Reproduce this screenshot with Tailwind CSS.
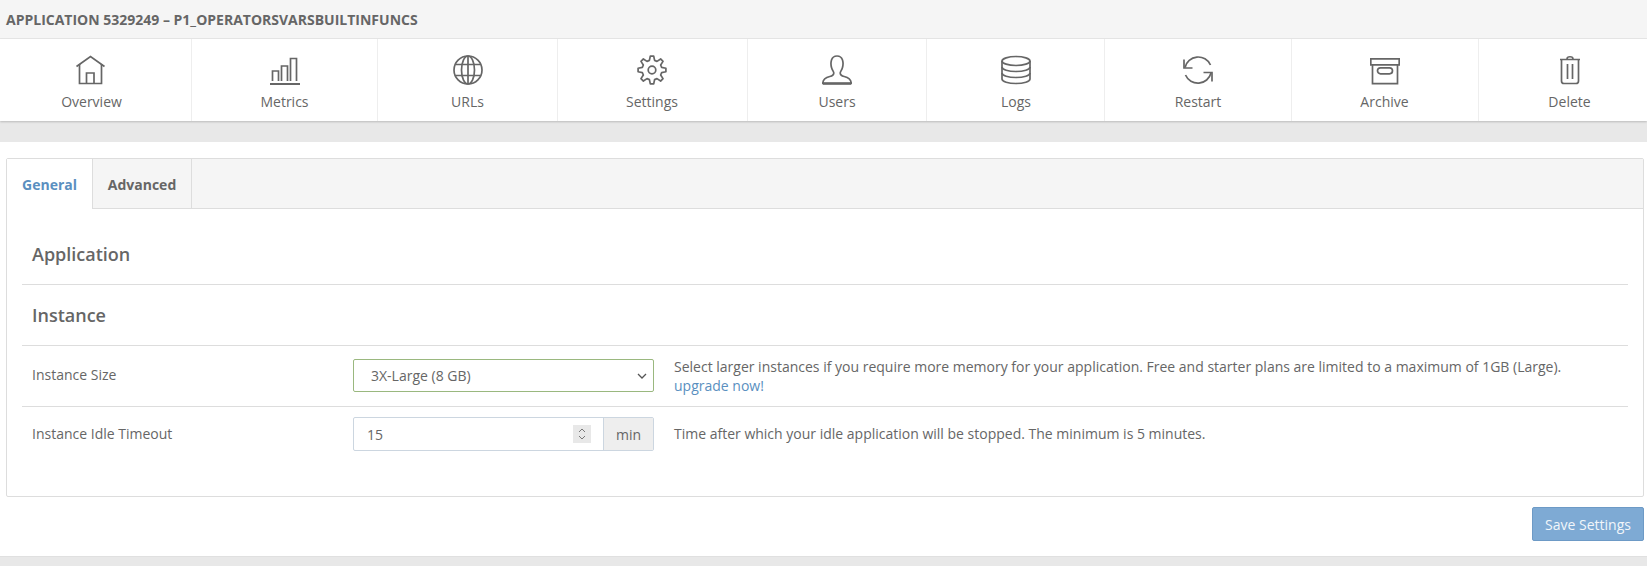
<!DOCTYPE html>
<html lang="en">
<head>
  <meta charset="UTF-8">
  <title>Application Settings</title>
  <script src="https://cdn.jsdelivr.net/npm/@tailwindcss/browser@4"></script>
</head>
<body class="bg-white font-['Open_Sans',sans-serif] text-[14px] text-[#666] overflow-hidden h-[566px] flex flex-col">
  <!-- title bar -->
  <div class="h-[39px] bg-[#f5f5f5] border-b border-[#e7e7e7] flex items-center px-[6px] font-bold uppercase">Application 5329249 – P1_OperatorsVarsBuiltinFuncs</div>

  <!-- toolbar -->
  <div class="h-[82px] grid grid-cols-[192px_186px_180px_190px_179px_178px_187px_187px_168px] bg-white shadow-[0_1px_2px_rgba(0,0,0,0.2)] relative">
    <a class="flex flex-col items-center pt-[16px] pr-[8px] border-r border-[#eee]">
      <svg class="w-[30px] h-[30px] -translate-x-[2px]" viewBox="0 0 30 30" fill="none" stroke="#666" stroke-width="1.700"><path d="M1.500 11.500 15.500 1.500l14 10"/><path d="M4.500 9v19.500h22V9"/><path d="M11.500 28.500V18h7.500v10.500"/></svg>
      <span class="mt-[7px] leading-[20px]">Overview</span>
    </a>
    <a class="flex flex-col items-center pt-[16px] border-r border-[#eee]">
      <svg class="w-[30px] h-[30px]" viewBox="0 0 30 30" fill="none" stroke="#666" stroke-width="1.700"><path d="M0 29h30" stroke-width="2"/><path d="M2.500 26V16h6v10M11.500 26V11h6v15M20.500 26V3.500h6V26"/></svg>
      <span class="mt-[7px] leading-[20px]">Metrics</span>
    </a>
    <a class="flex flex-col items-center pt-[16px] border-r border-[#eee]">
      <svg class="w-[30px] h-[30px]" viewBox="0 0 30 30" fill="none" stroke="#666" stroke-width="1.700"><circle cx="15" cy="15" r="14"/><ellipse cx="15" cy="15" rx="6.500" ry="14"/><path d="M15 1v28M2.500 9.500h25M2.500 20.500h25"/></svg>
      <span class="mt-[7px] leading-[20px]">URLs</span>
    </a>
    <a class="flex flex-col items-center pt-[16px] pr-[1px] border-r border-[#eee]">
      <svg class="w-[30px] h-[30px]" viewBox="0 0 30 30" fill="none" stroke="#666" stroke-width="1.700" stroke-linejoin="round"><circle cx="15" cy="15" r="3.800"/><path d="M13.290 1.100H16.710L17.590 5.340 20 6.340 23.620 3.970 26.030 6.380 23.660 10 24.660 12.410 28.900 13.290V16.710L24.660 17.590 23.660 20 26.030 23.620 23.620 26.030 20 23.660 17.590 24.660 16.710 28.900H13.290L12.410 24.660 10 23.660 6.380 26.030 3.970 23.620 6.340 20 5.340 17.590 1.100 16.710V13.290L5.340 12.410 6.340 10 3.970 6.380 6.380 3.970 10 6.340 12.410 5.340z"/></svg>
      <span class="mt-[7px] leading-[20px]">Settings</span>
    </a>
    <a class="flex flex-col items-center pt-[16px] border-r border-[#eee]">
      <svg class="w-[30px] h-[30px]" viewBox="0 0 30 30" fill="none" stroke="#666" stroke-width="1.700" stroke-linejoin="round"><path d="M.8 28.500c0-4.500 3-6 7-7 2.500-.6 4-1.500 4-3.500 0-1.500-1.500-2.500-2.300-5.500-.6-2.200-.8-5 0-7.500C10.300 2.500 12.500 1 15 1s4.700 1.500 5.500 4c.8 2.500.6 5.300 0 7.500-.8 3-2.300 4-2.300 5.500 0 2 1.500 2.900 4 3.500 4 1 7 2.500 7 7z"/><path d="M.8 28.500h28.400" stroke-width="2.500"/></svg>
      <span class="mt-[7px] leading-[20px]">Users</span>
    </a>
    <a class="flex flex-col items-center pt-[16px] pl-[1px] border-r border-[#eee]">
      <svg class="w-[30px] h-[30px]" viewBox="0 0 30 30" fill="none" stroke="#666" stroke-width="1.700"><ellipse cx="15" cy="6" rx="14" ry="4.500"/><path d="M1 6v18c0 2.500 6.300 4.500 14 4.500s14-2 14-4.500V6"/><path d="M1 12c0 2.500 6.300 4.500 14 4.500S29 14.500 29 12M1 18c0 2.500 6.300 4.500 14 4.500S29 20.500 29 18"/></svg>
      <span class="mt-[7px] leading-[20px]">Logs</span>
    </a>
    <a class="flex flex-col items-center pt-[16px] border-r border-[#eee]">
      <svg class="w-[30px] h-[30px]" viewBox="0 0 30 30" fill="none" stroke="#666" stroke-width="1.700"><path d="M1 4.500V13H9.500M29 26.500V17.500H20.500"/><path d="M2 12.500A13.500 13.500 0 0 1 27.500 10M28 18A13.500 13.500 0 0 1 2.500 20"/></svg>
      <span class="mt-[7px] leading-[20px]">Restart</span>
    </a>
    <a class="flex flex-col items-center pt-[16px] pr-[1px] border-r border-[#eee]">
      <svg class="w-[30px] h-[30px]" viewBox="0 0 30 30" fill="none" stroke="#666" stroke-width="1.700"><path d="M.8 3.800h28.400v6H.8z"/><path d="M2.500 10v18.700h25V10"/><rect x="7.500" y="12.800" width="15" height="6" rx="3"/></svg>
      <span class="mt-[7px] leading-[20px]">Archive</span>
    </a>
    <a class="flex flex-col items-center pt-[16px] pl-[13px]">
      <svg class="w-[30px] h-[30px]" viewBox="0 0 30 30" fill="none" stroke="#666" stroke-width="1.700"><path d="M5 4.500h20M12 4c0-3 6-3 6 0"/><path d="M6.500 5v21c0 1.500 1 2.500 2.500 2.500h12c1.500 0 2.500-1 2.500-2.500V5"/><path d="M12.500 9v15M17.500 9v15"/></svg>
      <span class="mt-[7px] leading-[20px]">Delete</span>
    </a>
  </div>

  <!-- grey band -->
  <div class="h-[21px] bg-[#e8e8e8]"></div>

  <!-- content -->
  <div class="flex-1 pl-[6px] pr-[3px] pt-[16px]">
    <div class="h-[339px] border border-[#ddd] rounded-[2px]">
      <div class="flex h-[50px] bg-[#f5f5f5] border-b border-[#ddd]">
        <div class="w-[86px] h-[50px] pt-[1px] bg-white border-r border-[#ddd] flex items-center justify-center font-bold text-[#5a8fc0]">General</div>
        <div class="w-[99px] pt-[1px] border-r border-[#ddd] flex items-center justify-center font-bold">Advanced</div>
      </div>
      <div class="px-[15px]">
        <h3 class="h-[76px] pt-[25px] px-[10px] text-[18px] font-semibold leading-[40px] border-b border-[#ddd]">Application</h3>
        <h3 class="h-[61px] px-[10px] text-[18px] font-semibold leading-[60px] border-b border-[#ddd]">Instance</h3>
        <div class="flex h-[61px] px-[10px] border-b border-[#ddd]">
          <label class="w-[321px] pt-[20px] leading-[18px]">Instance Size</label>
          <div class="w-[301px] h-[33px] mt-[13px] border border-[#9ab87f] rounded-[2px] flex items-center justify-between pl-[17px] pr-[5px]">
            <span>3X-Large (8 GB)</span>
            <svg class="w-[12px] h-[12px]" viewBox="0 0 12 12" fill="none" stroke="#555" stroke-width="1.300"><path d="M2 4l4 4 4-4"/></svg>
          </div>
          <p class="ml-[20px] mt-[11px] leading-[19px]">Select larger instances if you require more memory for your application. Free and starter plans are limited to a maximum of 1GB (Large).<br><a class="text-[#5a8fc0]">upgrade now!</a></p>
        </div>
        <div class="flex px-[10px]">
          <label class="w-[321px] pt-[18px] leading-[18px]">Instance Idle Timeout</label>
          <div class="w-[301px] h-[34px] mt-[10px] flex border border-[#ccd6e0] rounded-[2px]">
            <div class="flex-1 flex items-center justify-between pl-[13px] pr-[12px]">
              <span>15</span>
              <span class="w-[18px] h-[18px] bg-[#e8e8e8] flex items-center justify-center">
                <svg class="w-[12px] h-[14px]" viewBox="0 0 12 14" fill="none" stroke="#777"><path d="M3 5l3-3 3 3M3 9l3 3 3-3"/></svg>
              </span>
            </div>
            <div class="w-[50px] bg-[#eee] border-l border-[#ccd6e0] flex items-center justify-center">min</div>
          </div>
          <p class="ml-[20px] mt-[18px] leading-[18px]">Time after which your idle application will be stopped. The minimum is 5 minutes.</p>
        </div>
      </div>
    </div>
    <div class="flex justify-end pt-[10px]">
      <button class="w-[112px] h-[34px] bg-[#7eaad4] border border-[#6d9ac6] rounded-[2px] text-[#f2f6fa]">Save Settings</button>
    </div>
  </div>

  <div class="h-[10px] bg-[#e8e8e8] border-t border-[#e0e0e0]"></div>
</body>
</html>
